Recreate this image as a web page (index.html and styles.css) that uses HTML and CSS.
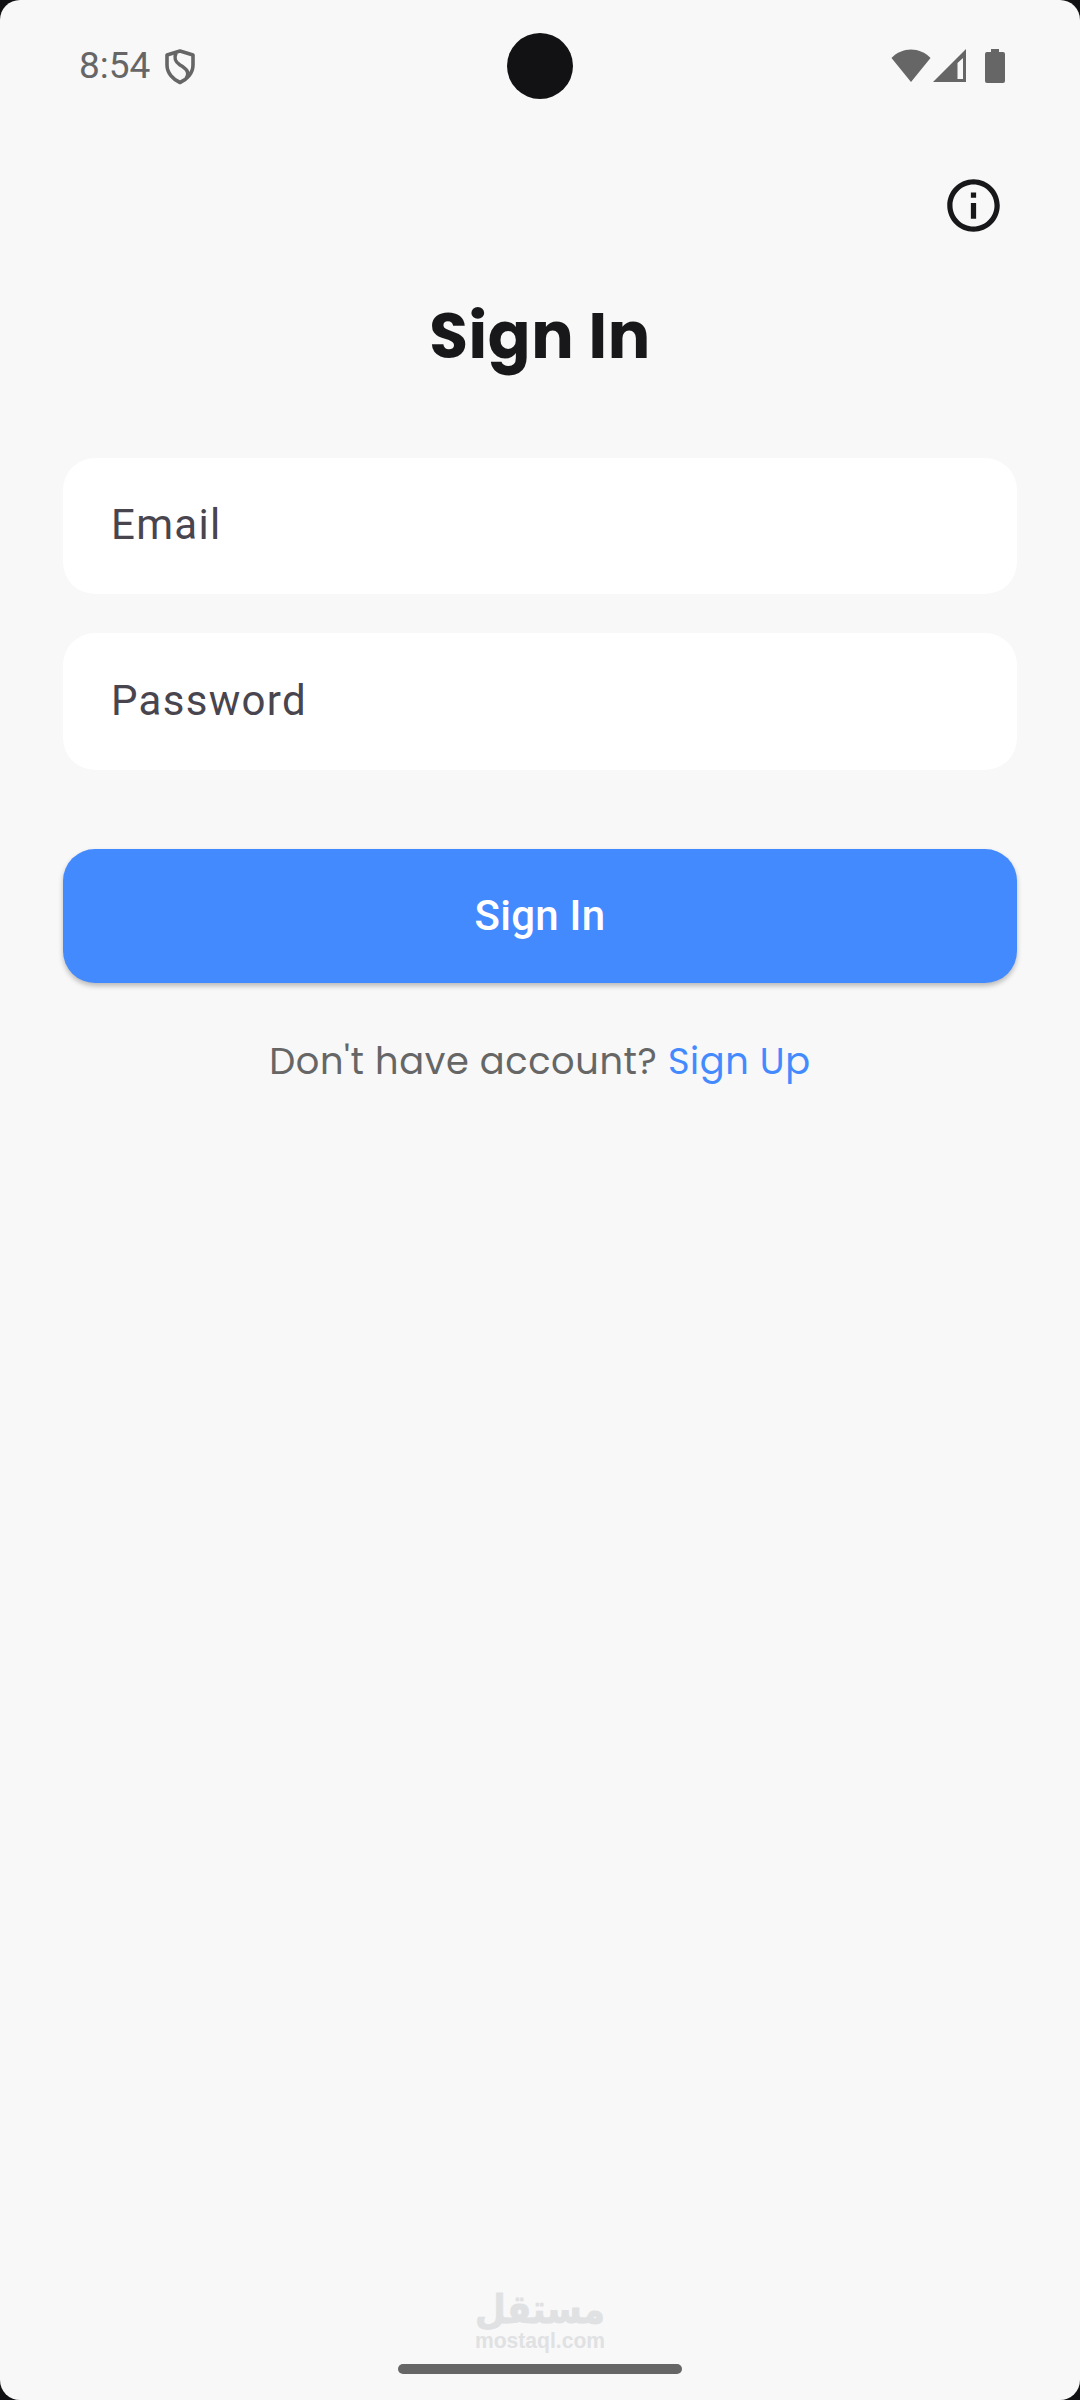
FILE: index.html
```html
<!DOCTYPE html>
<html lang="en">
<head>
    <meta charset="UTF-8">
    <meta name="viewport" content="width=device-width, initial-scale=1.0">
    <title>Sign In</title>
    <link rel="stylesheet" href="styles.css">
</head>
<body>
    <div class="screen">
        <header class="status-bar">
            <div class="status-left">
                <span class="time">8:54</span>
                <svg class="shield" width="30" height="36" viewBox="0 0 30 36" fill="none" stroke="#666" stroke-width="3.6" stroke-linejoin="round">
                    <path d="M15 2 L28 6 V16 C28 24 22 30.500 15 33.500 C8 30.500 2 24 2 16 V6 Z"/>
                    <path d="M11 4 C8.500 10 10.500 13 15 16 C21 19.500 25 23 21.500 29"/>
                </svg>
            </div>
            <div class="camera"></div>
            <div class="status-right">
                <svg class="wifi" width="40" height="34" viewBox="0 0 40 34" fill="#666">
                    <path d="M0.500 9 C11 -2.500 29 -2.500 39.500 9 L20 33 Z"/>
                </svg>
                <svg class="signal" width="33" height="34" viewBox="0 0 33 34" fill="#666" fill-rule="evenodd">
                    <path d="M33 0 V33 H0 Z M30 9 L24.500 14 V30 H30 Z"/>
                </svg>
                <svg class="battery" width="20" height="34" viewBox="0 0 20 34" fill="#666">
                    <path d="M6 0 H14 V3 H18 Q20 3 20 5 V32 Q20 34 18 34 H2 Q0 34 0 32 V5 Q0 3 2 3 H6 Z"/>
                </svg>
            </div>
        </header>

        <nav class="top-actions">
            <svg class="info" width="63" height="63" viewBox="0 0 24 24" fill="#18181a">
                <path d="M11 7h2v2h-2zm0 4h2v6h-2zm1-9C6.480 2 2 6.480 2 12s4.480 10 10 10 10-4.480 10-10S17.520 2 12 2zm0 18c-4.410 0-8-3.590-8-8s3.590-8 8-8 8 3.590 8 8-3.590 8-8 8z"/>
            </svg>
        </nav>

        <main class="container">
            <h1>Sign In</h1>
            <form>
                <input type="email" class="field" placeholder="Email">
                <input type="password" class="field" placeholder="Password">
                <button type="button" class="submit">Sign In</button>
            </form>
            <p class="signup"><span class="question">Don't have account?</span> <a href="#">Sign Up</a></p>
        </main>

        <footer>
            <svg class="brand" width="180" height="92" viewBox="0 0 180 92" fill="#e0e1e3">
                <text class="brand-ar" x="90" y="57" text-anchor="middle" textLength="130" lengthAdjust="spacingAndGlyphs">مستقل</text>
                <text class="brand-en" x="25" y="81.500" textLength="130" lengthAdjust="spacingAndGlyphs">mostaql.com</text>
            </svg>
            <div class="home-handle"></div>
        </footer>
    </div>
</body>
</html>
```

FILE: styles.css
```css
/* CSS Styles */
* {
    box-sizing: border-box;
}
body {
    font-family: Roboto, sans-serif;
    background-color: #121214; /* Shows behind the rounded corners */
    margin: 0;
}
.screen {
    display: flex;
    flex-direction: column;
    height: 2400px;
    background-color: #f8f8f8;
    border-radius: 20px;
}

/* Status bar */
.status-bar {
    display: grid;
    grid-template-columns: 1fr 66px 1fr;
    align-items: center;
    height: 132px;
    padding: 0 75px 0 79px;
}
.status-left,
.status-right {
    display: flex;
    align-items: center;
}
.status-left {
    margin-right: -2px;
}
.time {
    color: #666;
    font-size: 37px;
    line-height: 44px;
}
.shield {
    margin: 2px 0 0 15px;
}
.camera {
    width: 66px;
    height: 66px;
    margin-left: -2px;
    background-color: #121214;
    border-radius: 50%;
}
.status-right {
    justify-content: flex-end;
}
.signal {
    margin-left: 2px;
}
.battery {
    margin-left: 19px;
}

.top-actions {
    display: flex;
    justify-content: flex-end;
    height: 105px;
    padding: 42px 75px 0 0;
}

/* Sign in form */
.container {
    padding: 0 63px;
}
h1 {
    margin: 55px 0 0;
    color: #18181a;
    font-family: Poppins, Inter, sans-serif;
    font-size: 63px;
    font-weight: 700;
    letter-spacing: 0.66px;
    line-height: 88px;
    text-align: center;
}
form {
    display: flex;
    flex-direction: column;
    margin-top: 78px;
}
.field {
    height: 136px;
    margin-bottom: 39px;
    padding: 0 48px 4px;
    border: 0;
    border-radius: 32px;
    background-color: #fff;
    font-family: Roboto, sans-serif;
    font-size: 42px;
    letter-spacing: 1.3px;
}
.field[type="password"] {
    height: 137px;
    padding-bottom: 3px;
}
.field::placeholder {
    color: #49454f;
    opacity: 1;
}
.submit {
    height: 134px;
    margin-top: 40px;
    padding: 0 0 2px;
    border: 0;
    border-radius: 32px;
    background-color: #448aff; /* Blue button */
    color: #fff;
    font-family: Roboto, sans-serif;
    font-size: 42px;
    font-weight: 500;
    letter-spacing: 0.26px;
    box-shadow: 0 3px 5px rgba(0, 0, 0, 0.25);
}
.signup {
    margin: 52px 0 0;
    color: #666;
    font-family: Poppins, Inter, sans-serif;
    font-size: 36.75px;
    letter-spacing: 0.63px;
    line-height: 52px;
    text-align: center;
    white-space: nowrap;
}
.signup a {
    color: #448aff;
    text-decoration: none;
}

/* Bottom of the screen */
footer {
    display: flex;
    flex-direction: column;
    align-items: center;
    margin-top: auto;
    padding-bottom: 26px;
}
.brand {
    margin-bottom: 6px;
}
.brand-ar {
    font-family: "DejaVu Sans", sans-serif;
    font-size: 40px;
    font-weight: 700;
    stroke: #e0e1e3;
    stroke-width: 0.8px;
    stroke-linejoin: round;
}
.brand-en {
    font-family: "Liberation Sans", Arial, sans-serif;
    font-size: 22px;
    font-weight: 700;
}
.home-handle {
    width: 284px;
    height: 10px;
    border-radius: 5px;
    background-color: #666;
}
```
